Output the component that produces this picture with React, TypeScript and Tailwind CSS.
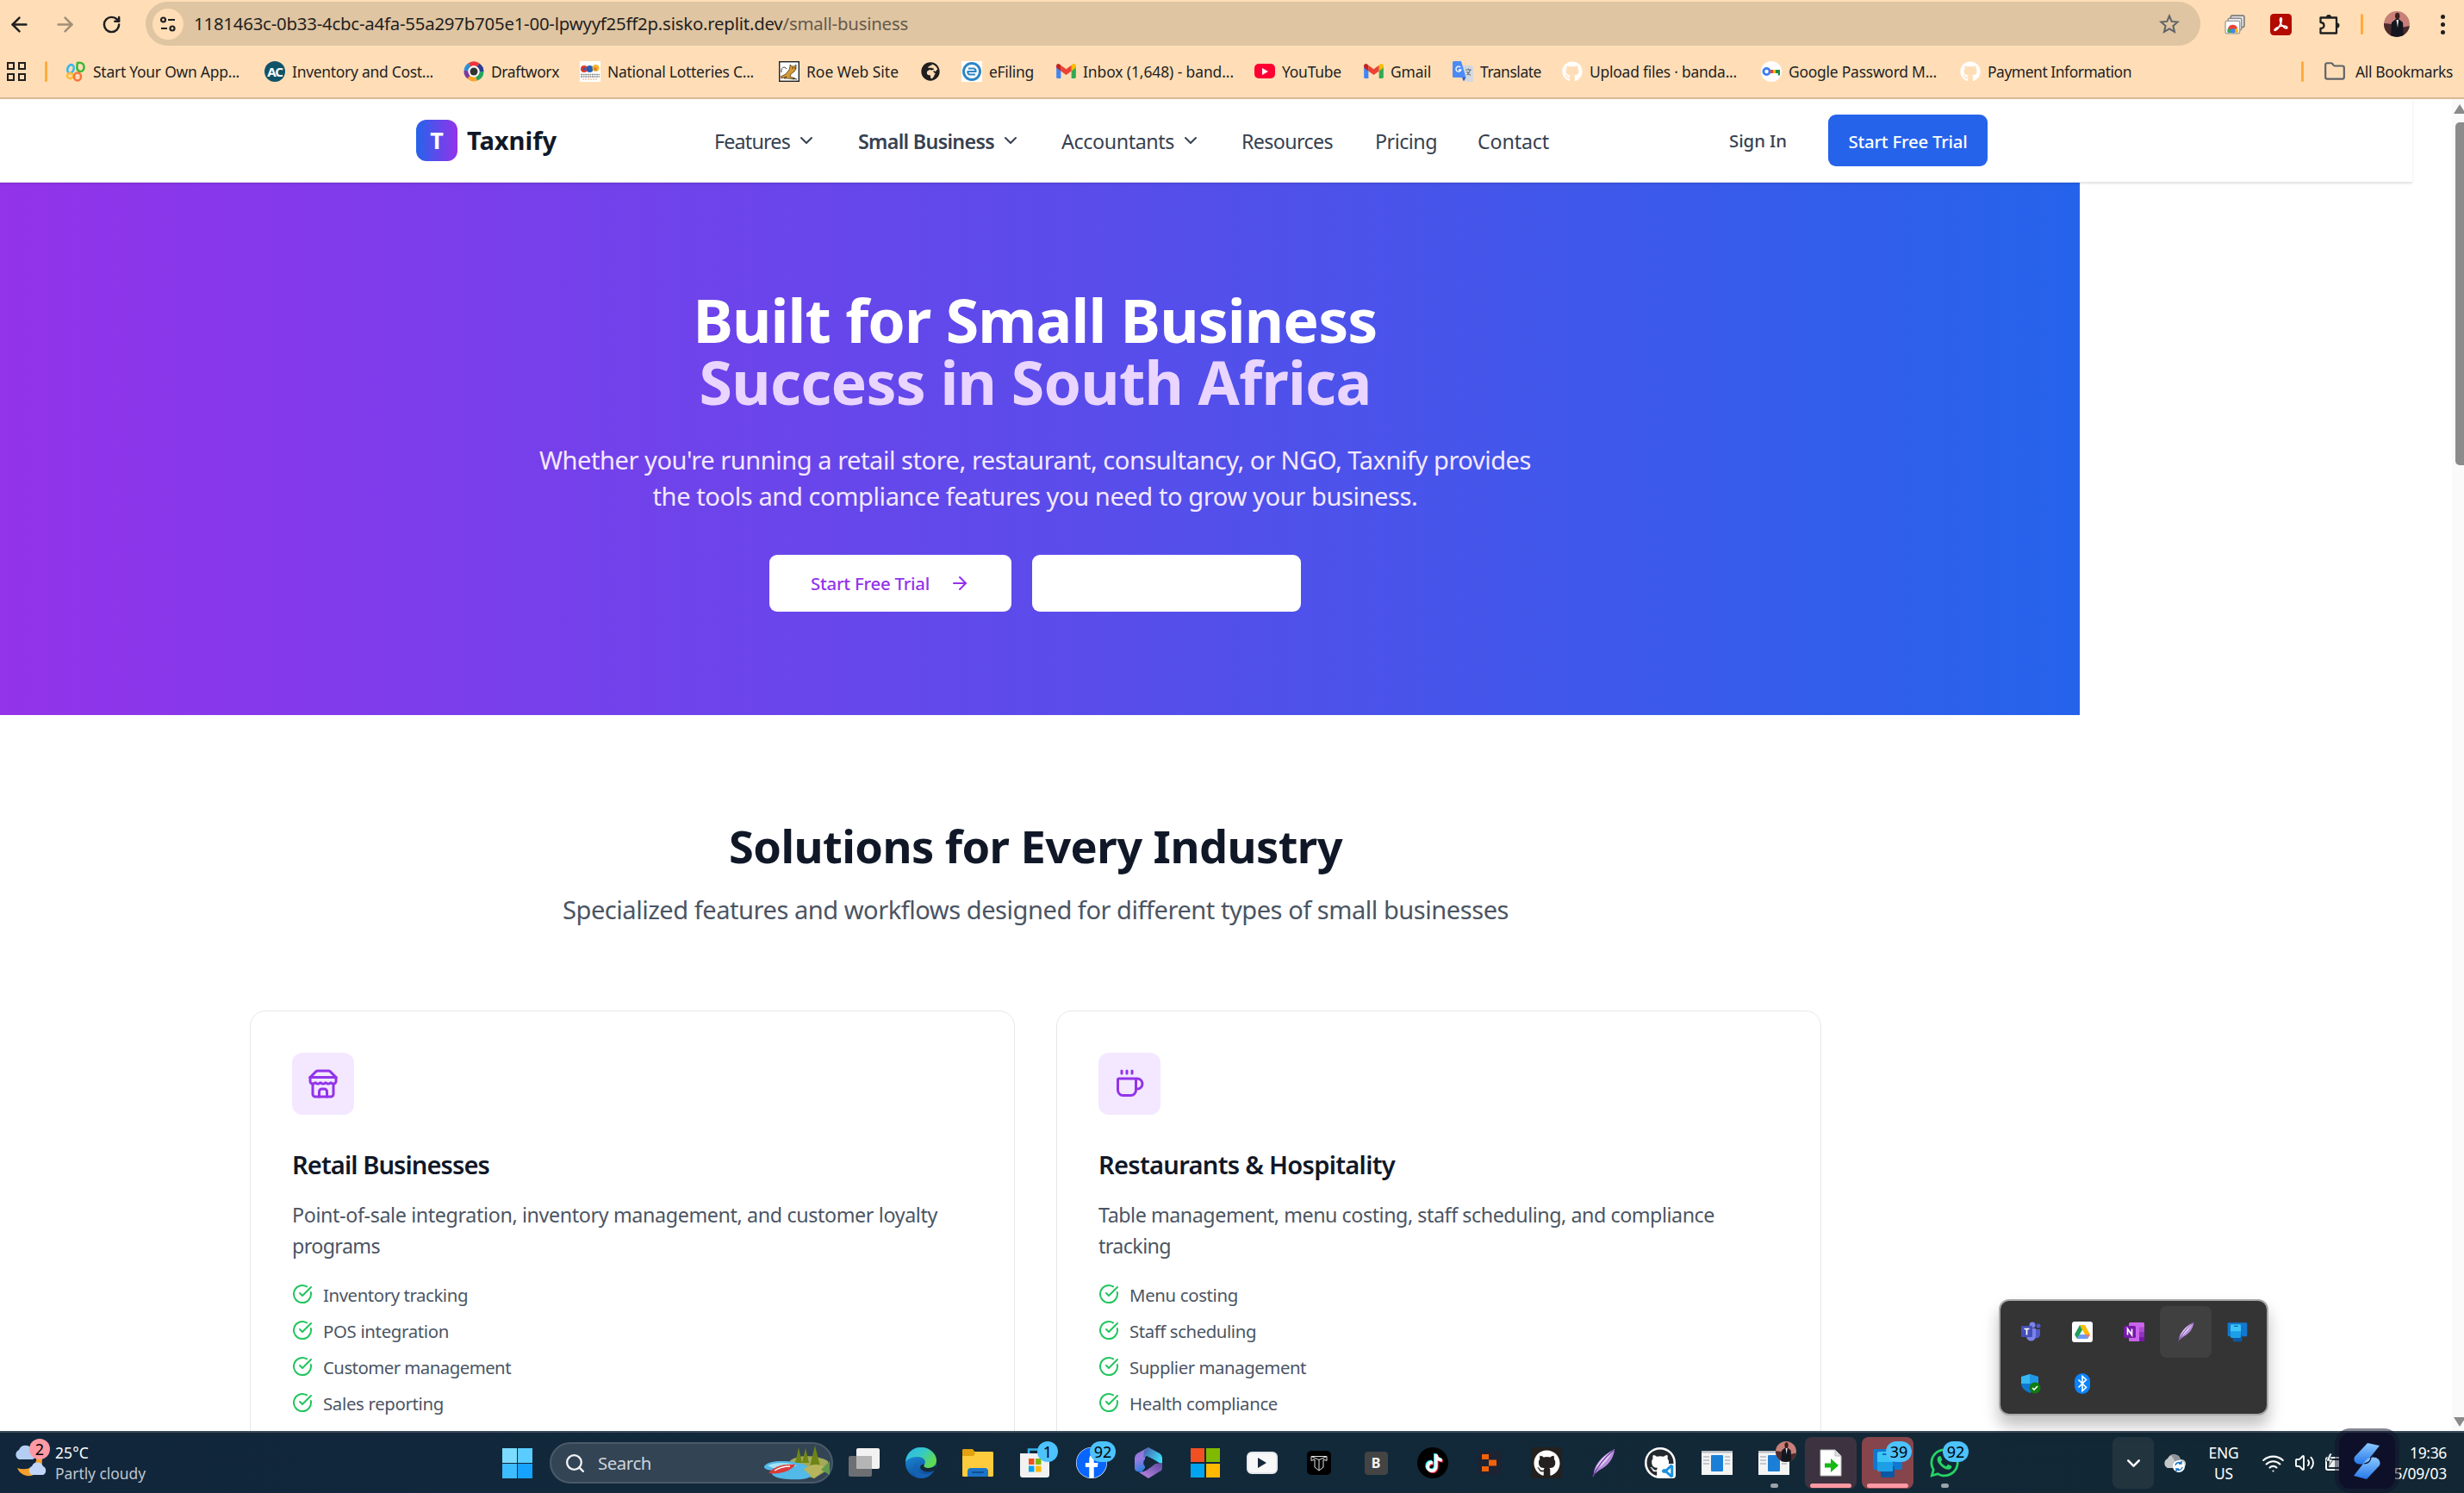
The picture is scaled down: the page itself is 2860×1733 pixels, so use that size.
import React, { useLayoutEffect, useRef } from "react";
import {
  ArrowLeft, ArrowRight, RotateCw, Folder, ChevronDown, Coffee, Search, Wifi, Volume2,
} from "lucide-react";
import { FaGithub, FaTiktok, FaWhatsapp, FaFacebook, FaGlobeAfrica } from "react-icons/fa";

/* Text set to a given measure by spreading its letters evenly. */
function T({ w, className = "", children }: { w: number; className?: string; children: React.ReactNode }) {
  const ref = useRef<HTMLSpanElement>(null);
  useLayoutEffect(() => {
    const el = ref.current;
    if (!el) return;
    el.style.letterSpacing = "0px";
    const natural = el.getBoundingClientRect().width;
    el.style.letterSpacing = (w - natural) / (el.textContent || " ").length + "px";
  }, [w]);
  return <span ref={ref} className={"inline-block text-[0.97em] whitespace-nowrap " + className}>{children}</span>;
}

function Gmail() {
  return (
    <svg viewBox="0 0 24 18" className="h-[17px] w-[23px]">
      <path d="M0 2v15a1.500 1.500 0 0 0 1.500 1H5.500V8z" fill="#4285f4" />
      <path d="M18.500 18h4a1.500 1.500 0 0 0 1.500-1.500V3l-5.500 5z" fill="#34a853" />
      <path d="M18.500 1.800V9L24 4.800V2.500c0-2.200-2.500-3.300-4.200-2z" fill="#fbbc04" />
      <path d="M5.500 9V1.800L12 6.700l6.500-4.900V9L12 13.800z" fill="#ea4335" />
      <path d="M0 2.500v2.300L5.500 9V1.800L4.200.7C2.400-.6 0 .4 0 2.500z" fill="#c5221f" />
    </svg>
  );
}

function Petals() {
  return (
    <svg viewBox="0 0 24 24" className="size-6" fill="none" strokeWidth="2.600">
      <ellipse cx="6" cy="9" rx="3.500" ry="5" stroke="#35b8f0" transform="rotate(20 6 9)" />
      <path d="M14 2c6-1 8 2 7.500 6s-4 4.500-6 3.500-2.500-5-1.500-9.500z" stroke="#3fb83a" />
      <ellipse cx="5.500" cy="17" rx="3.500" ry="3" stroke="#ffbd3a" />
      <ellipse cx="14" cy="18" rx="4" ry="4.500" stroke="#f4763b" />
    </svg>
  );
}

function Wheel() {
  return (
    <svg viewBox="0 0 24 24" className="size-6" fill="none" strokeWidth="5">
      <path d="M7 4.300A9 9 0 0 1 17 4.500" stroke="#f0353d" />
      <path d="M17 4.500A9 9 0 0 1 21 12" stroke="#2d3e94" />
      <path d="M21 12a9 9 0 0 1-6 8.300" stroke="#26a561" />
      <path d="M15 20.300A9 9 0 0 1 6 18.500" stroke="#f7a52c" />
      <path d="M6 18.500A9 9 0 0 1 3 11" stroke="#7b3aa0" />
      <path d="M3 11a9 9 0 0 1 4-6.700" stroke="#2b8fd9" />
      <circle cx="12" cy="12" r="6.500" fill="#fff" stroke="none" />
      <circle cx="12" cy="12" r="4.500" fill="#333" stroke="none" />
    </svg>
  );
}

function Lottery() {
  return (
    <svg viewBox="0 0 24 24" className="size-6">
      <rect width="24" height="24" fill="#fff" />
      <circle cx="5" cy="9" r="4" fill="#e2382e" /><circle cx="11.500" cy="9" r="4" fill="#2460b8" /><circle cx="18.500" cy="8" r="4" fill="#f4b52c" />
      <circle cx="5" cy="9" r="1.500" fill="#2460b8" /><circle cx="18" cy="9" r="1.800" fill="#d9772b" />
      <path d="M1 15.500h22M1 18h22" stroke="#8b8b8b" strokeWidth="1.600" strokeDasharray="2 .6" />
      <path d="M3 21h18" stroke="#e5a87a" strokeDasharray="2 1" />
    </svg>
  );
}

function Cat() {
  return (
    <svg viewBox="0 0 24 24" className="size-6">
      <rect x=".7" y=".7" width="22.600" height="22.600" fill="#fff" stroke="#222" strokeWidth="1.400" />
      <path d="M13 4l2 2h3l2-2v5l-2 3-4 3-1 3 6 2-1 1-7-1-5 0 3-2-6 2-1-2 6-3 4-5 1-4z" fill="#d79b35" stroke="#3a2a12" strokeWidth=".7" />
      <path d="M3 13C2 8 6 5 9 9M16 20l5 1" fill="none" stroke="#333" />
      <circle cx="16" cy="8" r=".7" fill="#111" /><circle cx="19" cy="8" r=".7" fill="#111" />
    </svg>
  );
}

function EFiling() {
  return (
    <svg viewBox="0 0 24 24" className="size-6">
      <rect width="24" height="24" fill="#fff" />
      <circle cx="12" cy="12" r="9.500" fill="none" stroke="#2f86c4" strokeWidth="3" />
      <path d="M8 8.500h6a3 3 0 0 1 2.500 3.500H8M16 15.500H10a2.500 2.500 0 0 1-2.500-3.500v-1" fill="none" stroke="#2f86c4" strokeWidth="2.200" />
    </svg>
  );
}

function Translate() {
  return (
    <svg viewBox="0 0 24 24" className="size-6">
      <path d="M9 5h13.500A1.500 1.500 0 0 1 24 6.500V22.500a1.500 1.500 0 0 1-1.500 1.500H15z" fill="#d5d8dc" />
      <path d="M1.500 0H10l5.500 19H1.500A1.500 1.500 0 0 1 0 17.500v-16A1.500 1.500 0 0 1 1.500 0z" fill="#4c8bf5" />
      <path d="M11 19h4.500L13 23.500z" fill="#3a5bc0" />
      <path d="M9.300 7.200A3 3 0 1 0 9.800 10H7" fill="none" stroke="#fff" strokeWidth="1.300" />
      <path d="M15 10h7M18.500 8.500V10M20.500 10c-.6 3-2.500 5-4 6M16.500 12c1 2 3 4 4.500 4.500" fill="none" stroke="#5d7286" strokeWidth="1.200" />
    </svg>
  );
}

function PasswordKey() {
  return (
    <svg viewBox="0 0 24 24" className="size-6">
      <circle cx="12" cy="12" r="12" fill="#fff" />
      <circle cx="6.500" cy="12" r="3.600" fill="none" stroke="#3b7df0" strokeWidth="2.800" />
      <path d="M11 10h4v4h-4z" fill="#ea4335" /><path d="M14 10h4v4h-4z" fill="#fbbc04" />
      <path d="M17 10h5v6.500h-2.200V14H17z" fill="#1e8e3e" />
    </svg>
  );
}

const AC = () => <div className="flex size-6 items-center justify-center rounded-full bg-[#0f5368] text-[15px] font-bold tracking-[-1px] text-white">AC</div>;
const White = () => <FaGithub className="size-6 text-white" />;
const Tube = () => (
  <div className="flex h-[17px] w-6 items-center justify-center rounded-[5px] bg-[#ff0033]">
    <div className="border-y-4 border-l-[7px] border-y-transparent border-l-white" />
  </div>
);

const bookmarks: { icon: () => React.ReactNode; text: string; tw: number; box: string }[] = [
  { icon: Petals, text: "Start Your Own App...", tw: 170, box: "w-[231px]" },
  { icon: AC, text: "Inventory and Cost...", tw: 164, box: "w-[231px]" },
  { icon: Wheel, text: "Draftworx", tw: 79, box: "w-[135px]" },
  { icon: Lottery, text: "National Lotteries C...", tw: 170, box: "w-[231px]" },
  { icon: Cat, text: "Roe Web Site", tw: 107, box: "w-[164px]" },
  { icon: () => <FaGlobeAfrica className="size-[22px] text-[#1f1f1f]" />, text: "", tw: 0, box: "w-[48px]" },
  { icon: EFiling, text: "eFiling", tw: 52, box: "w-[109px]" },
  { icon: Gmail, text: "Inbox (1,648) - band...", tw: 175, box: "w-[231px]" },
  { icon: Tube, text: "YouTube", tw: 69, box: "w-[126px]" },
  { icon: Gmail, text: "Gmail", tw: 47, box: "w-[104px]" },
  { icon: Translate, text: "Translate", tw: 71, box: "w-[127px]" },
  { icon: White, text: "Upload files · banda...", tw: 171, box: "w-[231px]" },
  { icon: PasswordKey, text: "Google Password M...", tw: 172, box: "w-[231px]" },
  { icon: White, text: "Payment Information", tw: 167, box: "w-[200px]" },
];

function Portrait({ className = "" }: { className?: string }) {
  return (
    <svg viewBox="0 0 30 30" className={"shrink-0 rounded-full " + className}>
      <rect width="30" height="30" fill="#c87f78" />
      <path d="M0 14l10 1v15H0zM20 19l10-2v13H20z" fill="#4b2b2c" />
      <path d="M9 13l5-4h3l5 4 1 17H8z" fill="#14161f" />
      <path d="M14.500 10h2.500l-1 9z" fill="#f2f2f2" />
      <ellipse cx="15.700" cy="5.500" rx="2.700" ry="3.800" fill="#3a1f1a" />
    </svg>
  );
}

function Toolbar() {
  return (
    <div className="flex h-[56px] items-center text-[#1f1f1f]">
      <ArrowLeft className="ml-[9px] size-[27px]" strokeWidth={2.2} />
      <ArrowRight className="ml-[26px] size-[27px] text-[#a18f78]" strokeWidth={2.2} />
      <RotateCw className="ml-[29px] size-[23px]" strokeWidth={2.6} />
      <div className="mb-px ml-[28px] flex h-[51px] w-[2385px] items-center rounded-full bg-[#dfc5a2]">
        <div className="ml-2 flex size-9 items-center justify-center rounded-full bg-[#ffdeb7]">
          <svg viewBox="0 0 20 20" className="size-5" fill="none" stroke="#1f1f1f" strokeWidth="2.200">
            <circle cx="4.500" cy="5" r="2.500" /><path d="M10 5h8M2 15h7" /><circle cx="15" cy="15" r="2.500" />
          </svg>
        </div>
        <div className="ml-[12px] flex text-[21px]">
          <T w={829}>1181463c-0b33-4cbc-a4fa-55a297b705e1-00-lpwyyf25ff2p.sisko.replit.dev<span className="text-[#655a4c]">/small-business</span></T>
        </div>
        <svg viewBox="0 0 24 24" className="mr-[24px] ml-auto size-6" fill="none" stroke="#5f6368" strokeWidth="2">
          <path d="M12 2.500l2.700 6.400 6.900.6-5.200 4.600 1.600 6.800L12 17.300l-6 3.600 1.600-6.800L2.400 9.500l6.900-.6z" />
        </svg>
      </div>
      <svg viewBox="0 0 24 24" className="ml-7 size-[25px]">
        <rect x="7" y="2" width="15" height="13" rx="1.500" fill="#e6e6e6" stroke="#7d7d7d" strokeWidth="1.600" />
        <rect x="4" y="5" width="15" height="13" rx="1.500" fill="#eee" stroke="#8a8a8a" strokeWidth="1.300" />
        <rect x="1" y="8" width="16" height="14" rx="1.500" fill="#fff" stroke="#9a9a9a" strokeWidth="1.200" />
        <path d="M3.500 21a5.500 5.500 0 0 1 1.500-6l4 4v2z" fill="#34a853" /><path d="M4 16a5.500 5.500 0 0 1 10.500 0l-5 3z" fill="#ea4335" />
        <path d="M14 15.500a5.500 5.500 0 0 1 1 5.500h-5z" fill="#fbbc04" /><circle cx="9.500" cy="19" r="2.600" fill="#4285f4" />
      </svg>
      <svg viewBox="0 0 24 24" className="ml-7 size-[25px]">
        <rect width="24" height="24" rx="4" fill="#b30b00" />
        <path d="M5 18.500c-1-1.500 5-4.500 7.500-4.800 3-.5 7 .2 6.500 2-.8 2-6.500-2-7.500-6-.7-3-.7-5 .5-5s1 2.500 0 5.500c-1 3-4.500 9-7 8.300z" fill="none" stroke="#fff" strokeWidth="1.600" />
      </svg>
      <svg viewBox="0 0 26 26" className="ml-[31px] size-[26px]" fill="none" stroke="#1f1f1f" strokeWidth="2.300" strokeLinejoin="round">
        <path d="M2.500 5.500H21v18H2.500v-5.500c3-.2 4-1.500 4-3.500s-1-3.300-4-3.500z" />
        <path d="M9 5a3 3 0 0 1 6 0zM21.500 11.500a3 3 0 0 1 0 6z" fill="#1f1f1f" stroke="none" />
      </svg>
      <div className="ml-[23px] h-6 w-[3px] rounded bg-[#ffab3d]" />
      <Portrait className="ml-[24px] size-[30px]" />
      <div className="ml-[36px] flex flex-col gap-1">
        <div className="size-[5px] rounded-full bg-current" /><div className="size-[5px] rounded-full bg-current" /><div className="size-[5px] rounded-full bg-current" />
      </div>
    </div>
  );
}

function Bookmarks() {
  return (
    <div className="flex h-[57px] items-center pb-[3px] text-[18px] text-[#1f1f1f]">
      <div className="ml-2 grid grid-cols-2 gap-[4px]">
        <div className="size-[9px] border-2 border-current" /><div className="size-[9px] border-2 border-current" />
        <div className="size-[9px] border-2 border-current" /><div className="size-[9px] border-2 border-current" />
      </div>
      <div className="ml-[22px] h-6 w-[3px] rounded bg-[#ffab3d]" />
      <div className="ml-[21px] flex">
        {bookmarks.map((b, i) => (
          <div key={i} className={"flex shrink-0 items-center " + b.box}>
            <div className="mr-[8px] flex w-6 shrink-0 justify-center"><b.icon /></div>
            {b.text && <T w={b.tw}>{b.text}</T>}
          </div>
        ))}
      </div>
      <div className="mr-[23px] ml-auto h-6 w-[3px] rounded bg-[#ffab3d]" />
      <Folder className="mr-[11px] size-[26px] text-[#5f6368]" strokeWidth={2} />
      <div className="mr-[13px]"><T w={113}>All Bookmarks</T></div>
    </div>
  );
}

const nav = [
  { text: "Features", w: 88, box: "w-[167px]", menu: true, bold: false },
  { text: "Small Business", w: 158, box: "w-[236px]", menu: true, bold: true },
  { text: "Accountants", w: 131, box: "w-[209px]", menu: true, bold: false },
  { text: "Resources", w: 106, box: "w-[155px]", menu: false, bold: false },
  { text: "Pricing", w: 72, box: "w-[119px]", menu: false, bold: false },
  { text: "Contact", w: 83, box: "w-[292px]", menu: false, bold: false },
];

function Header() {
  return (
    <header className="relative flex h-[97px] w-[2800px] items-center border-b border-gray-200 bg-white pl-[483px] shadow-sm">
      <div className="flex size-12 items-center justify-center rounded-xl bg-linear-to-r/srgb from-[#2563eb] to-[#9333ea] text-[27px] font-bold text-white">T</div>
      <div className="ml-[11px] w-[287px] text-[30px] font-bold text-gray-900"><T w={104}>Taxnify</T></div>
      <nav className="flex text-[24px] text-[#374151]">
        {nav.map((n) => (
          <div key={n.text} className={"flex items-center " + n.box}>
            <T w={n.w} className={n.bold ? "pt-[2px] font-semibold" : "pt-[2px]"}>{n.text}</T>
            {n.menu && <ChevronDown className="ml-[7px] size-6" strokeWidth={2} />}
          </div>
        ))}
      </nav>
      <div className="pt-[2px] text-[21px] font-medium text-[#374151]"><T w={67}>Sign In</T></div>
      <div className="ml-[48px] flex h-[60px] w-[185px] items-center justify-center rounded-[9px] bg-[#2563eb] pt-[2px] text-[21px] font-medium text-white"><T w={138}>Start Free Trial</T></div>
    </header>
  );
}

function Hero() {
  return (
    <section className="flex h-[618px] w-[2414px] flex-col items-center bg-linear-to-r/srgb from-[#9333ea] to-[#2563eb] pt-[123px] pr-[11px]">
      <h1 className="flex flex-col items-center text-[72px] leading-[72px] font-bold text-white">
        <T w={794}>Built for Small Business</T>
        <T w={780} className="text-[#e9d5ff]">Success in South Africa</T>
      </h1>
      <p className="mt-[34px] flex flex-col items-center text-[30px] leading-[42px] text-[#f3e8ff]">
        <T w={1151}>Whether you're running a retail store, restaurant, consultancy, or NGO, Taxnify provides</T>
        <T w={888}>the tools and compliance features you need to grow your business.</T>
      </p>
      <div className="mt-[47px] flex gap-6">
        <div className="flex h-[66px] w-[281px] items-center rounded-[9px] bg-white pl-12 text-[21px] font-medium text-[#9333ea]">
          <T w={138} className="pt-px">Start Free Trial</T>
          <ArrowRight className="ml-[23px] size-6" strokeWidth={2} />
        </div>
        <div className="h-[66px] w-[312px] rounded-[9px] bg-white" />
      </div>
    </section>
  );
}

function StoreIcon() {
  return (
    <svg viewBox="0 0 24 24" className="size-9" fill="none" stroke="currentColor" strokeWidth="2" strokeLinecap="round" strokeLinejoin="round">
      <path d="m2 7 4.410-4.410A2 2 0 0 1 7.830 2h8.340a2 2 0 0 1 1.420.590L22 7" />
      <path d="M4 12v8a2 2 0 0 0 2 2h12a2 2 0 0 0 2-2v-8" />
      <path d="M15 22v-4a2 2 0 0 0-2-2h-2a2 2 0 0 0-2 2v4" />
      <path d="M2 7h20" />
      <path d="M22 7v3a2 2 0 0 1-2 2a2.700 2.700 0 0 1-1.590-.630.700.700 0 0 0-.820 0A2.700 2.700 0 0 1 16 12a2.700 2.700 0 0 1-1.590-.630.700.700 0 0 0-.820 0A2.700 2.700 0 0 1 12 12a2.700 2.700 0 0 1-1.590-.630.700.700 0 0 0-.820 0A2.700 2.700 0 0 1 8 12a2.700 2.700 0 0 1-1.590-.630.700.700 0 0 0-.820 0A2.700 2.700 0 0 1 4 12a2 2 0 0 1-2-2V7" />
    </svg>
  );
}

function Check() {
  return (
    <svg viewBox="0 0 24 24" className="size-6 text-[#22c55e]" fill="none" stroke="currentColor" strokeWidth="2" strokeLinecap="round" strokeLinejoin="round">
      <path d="M21.801 10A10 10 0 1 1 17 3.335" /><path d="m9 11 3 3L22 4" />
    </svg>
  );
}

type Line = [string, number];
function Card({ icon, title, lines, items }: { icon: React.ReactNode; title: Line; lines: Line[]; items: Line[] }) {
  return (
    <div className="h-[700px] w-[888px] shrink-0 rounded-[18px] border border-gray-200 bg-white px-12 pt-12">
      <div className="flex size-[72px] items-center justify-center rounded-xl bg-[#f3e8ff] text-[#9333ea]">{icon}</div>
      <h3 className="mt-[35px] text-[30px] leading-[45px] font-semibold text-gray-900"><T w={title[1]}>{title[0]}</T></h3>
      <p className="mt-[17px] flex flex-col items-start text-[24px] leading-9 text-[#4b5563]">
        {lines.map((l) => <T key={l[0]} w={l[1]}>{l[0]}</T>)}
      </p>
      <ul className="mt-[24px] flex flex-col gap-3 text-[21px] leading-[30px] text-[#4b5563]">
        {items.map((l) => (
          <li key={l[0]} className="flex h-[30px] items-center gap-3"><div className="mb-[2px]"><Check /></div><T w={l[1]}>{l[0]}</T></li>
        ))}
      </ul>
    </div>
  );
}

function Industries() {
  return (
    <section className="flex w-[2404px] flex-col items-center pt-[121px]">
      <h2 className="text-[54px] leading-[60px] font-bold text-gray-900"><T w={712}>Solutions for Every Industry</T></h2>
      <p className="mt-[23px] text-[30px] leading-[42px] text-[#4b5563]"><T w={1098}>Specialized features and workflows designed for different types of small businesses</T></p>
      <div className="mt-24 flex gap-12">
        <Card
          icon={<StoreIcon />}
          title={["Retail Businesses", 229]}
          lines={[["Point-of-sale integration, inventory management, and customer loyalty", 749], ["programs", 102]]}
          items={[["Inventory tracking", 168], ["POS integration", 146], ["Customer management", 218], ["Sales reporting", 140]]}
        />
        <Card
          icon={<Coffee className="size-9" strokeWidth={2} />}
          title={["Restaurants & Hospitality", 344]}
          lines={[["Table management, menu costing, staff scheduling, and compliance", 715], ["tracking", 84]]}
          items={[["Menu costing", 126], ["Staff scheduling", 147], ["Supplier management", 205], ["Health compliance", 172]]}
        />
      </div>
    </section>
  );
}

function Feather({ className = "" }: { className?: string }) {
  return (
    <svg viewBox="0 0 32 36" className={className}>
      <path d="M4 33C4 23 12 10 30 1c-1 11-7 20-19 26z" fill="#b68bdc" />
      <path d="M6 27C9 17 17 8 28 3c-5 9-10 16-20 23z" fill="#e0cdf3" />
      <path d="M3 35C9 22 17 12 29 2" fill="none" stroke="#7440a5" strokeWidth="1.500" />
    </svg>
  );
}

function Phone({ className = "" }: { className?: string }) {
  return (
    <svg viewBox="0 0 36 36" className={className}>
      <rect x="1" y="2" width="34" height="24" rx="2" fill="#1178cf" />
      <rect x="10" y="22" width="16" height="13" rx="2" fill="#0a58a5" />
      <rect x="6" y="5" width="18" height="23" rx="2" fill="#3cc4f5" />
      <path d="M6 17h18v9a2 2 0 0 1-2 2H8a2 2 0 0 1-2-2z" fill="#1c9fe6" />
      <rect x="12" y="7" width="7" height="2" fill="#0d6db6" />
    </svg>
  );
}

const Badge = ({ children, wide = false }: { children: React.ReactNode; wide?: boolean }) => (
  <div className={"absolute flex h-6 items-center justify-center rounded-full bg-[#4cc2ff] text-[18px] text-black " + (wide ? "top-[5px] left-[28px] w-[30px]" : "top-[5px] left-[33px] w-6")}>{children}</div>
);

function WindowIcon() {
  return (
    <svg viewBox="0 0 36 28" className="h-7 w-9">
      <rect width="36" height="28" fill="#f4f4f4" /><rect width="36" height="2.500" fill="#b9bdc2" />
      <path d="M2 7h7M2 11h7M2 15h7M27 7h6M27 11h6M27 15h6" stroke="#c4c8cc" strokeWidth="2" />
      <rect x="11" y="5" width="14" height="19" rx="1" fill="#1a7fd6" />
    </svg>
  );
}

const apps: { icon: React.ReactNode; badge?: React.ReactNode; cls?: string; bar?: "dot" | "line" }[] = [
  { icon: <svg viewBox="0 0 36 36" className="size-9"><rect y="10" width="27" height="24" rx="2" fill="#6d6f72" /><rect x="9" y="1" width="27" height="24" rx="2" fill="#f2f2f2" /><path d="M9 10h18v15H11a2 2 0 0 1-2-2z" fill="#b5b5b5" /></svg> },
  { icon: (
    <svg viewBox="0 0 36 36" className="size-9">
      <defs>
        <linearGradient id="ea" x1="0" y1="0" x2="1" y2=".6"><stop offset="0" stopColor="#2fb5ee" /><stop offset=".5" stopColor="#34c9c8" /><stop offset="1" stopColor="#62db4a" /></linearGradient>
        <linearGradient id="eb" x1="0" y1="0" x2=".4" y2="1"><stop offset="0" stopColor="#1e9be6" /><stop offset="1" stopColor="#0f4f9c" /></linearGradient>
      </defs>
      <circle cx="18" cy="18" r="18" fill="url(#eb)" />
      <path d="M0 17C1 6 9 0 18 0c11 0 18 8 18 15 0 6-5 9-9 9-5 0-7-2-5-4 3-5-2-9-8-9C7 11 2 14 0 17z" fill="url(#ea)" />
      <path d="M22 20c-2 2 0 4 5 4 3 0 6-1 8-3v5c-7 4-15 3-18-2 0-3 2-5 5-4z" fill="#142838" />
      <path d="M14 17c-4 7 1 14 9 14 4 0 6-1 8-2-3 5-8 7-13 7-9-1-13-12-4-19z" fill="#1562b5" />
    </svg>) },
  { icon: <svg viewBox="0 0 36 34" className="h-[34px] w-9"><path d="M0 3a2 2 0 0 1 2-2h10l4 5H0z" fill="#e3a10d" /><rect y="4" width="36" height="29" rx="2" fill="#ffd04a" /><path d="M0 9l13 0 4-5h17a2 2 0 0 1 2 2v25a2 2 0 0 1-2 2H2a2 2 0 0 1-2-2z" fill="#fecb3c" /><path d="M0 3a2 2 0 0 1 2-2h9l4 5-2 3H0z" fill="#e3a10d" /><path d="M6 33v-6a4 4 0 0 1 4-4h16a4 4 0 0 1 4 4v6z" fill="#1c74c8" /><rect x="11" y="27" width="14" height="2" rx="1" fill="#0d4f93" /></svg> },
  { icon: <svg viewBox="0 0 36 36" className="size-9"><path d="M11 8V2.500h14V8" fill="none" stroke="#35b3ea" strokeWidth="2.500" /><path d="M1 7h34v25a3 3 0 0 1-3 3H4a3 3 0 0 1-3-3z" fill="#f1f1f1" /><path d="M11 13h6.500v7H11z" fill="#f25022" /><path d="M19 13h6.500v7H19z" fill="#7fba00" /><path d="M11 21.500h6.500v7H11z" fill="#00a4ef" /><path d="M19 21.500h6.500v7H19z" fill="#ffb900" /></svg>, badge: <Badge>1</Badge> },
  { icon: <div className="rounded-full bg-white"><FaFacebook className="size-9 text-[#0866ff]" /></div>, badge: <Badge wide>92</Badge> },
  { icon: (
    <svg viewBox="0 0 32 36" className="h-9 w-8">
      <defs>
        <linearGradient id="ma" x1="0" y1="0" x2=".3" y2="1"><stop offset="0" stopColor="#7d6fd0" /><stop offset=".5" stopColor="#9a7be0" /><stop offset="1" stopColor="#2f7fe0" /></linearGradient>
        <linearGradient id="mb" x1="0" y1="0" x2="1" y2=".6"><stop offset="0" stopColor="#4a58a8" /><stop offset="1" stopColor="#3ddcf5" /></linearGradient>
        <linearGradient id="mc" x1="0" y1="1" x2="1" y2="0"><stop offset="0" stopColor="#c58ae8" /><stop offset="1" stopColor="#5a4a9c" /></linearGradient>
      </defs>
      <path d="M16 0L3 7q-3 2-3 5v12q0 3 3 4l5 1 4-5V12z" fill="url(#ma)" />
      <path d="M16 0l13 7q3 2 3 5v8l-10-6-8-4-4 2 1-8z" fill="url(#mb)" />
      <path d="M32 18v6q0 3-3 4l-13 8-11-7q6 0 11-4l8-6z" fill="url(#mc)" />
      <circle cx="16" cy="18" r="5.800" fill="#15293a" />
    </svg>) },
  { icon: <div className="grid grid-cols-2 gap-[2px]"><div className="size-4 bg-[#f25022]" /><div className="size-4 bg-[#7fba00]" /><div className="size-4 bg-[#00a4ef]" /><div className="size-4 bg-[#ffb900]" /></div> },
  { icon: <div className="flex h-[26px] w-9 items-center justify-center rounded-[6px] border-2 border-gray-200 bg-[#f8f8f8]"><div className="border-y-[6px] border-l-[10px] border-y-transparent border-l-[#17283a]" /></div> },
  { icon: <svg viewBox="0 0 28 28" className="size-7"><rect width="28" height="28" rx="5" fill="#000" /><path d="M5 6.500h18v5l-4-1.500v9l-5 4-5-4v-9l-4 1.500zM5 6.500l9 4 9-4M14 10.500v12" fill="none" stroke="#e5e5e5" strokeWidth="1" /></svg> },
  { icon: <div className="flex h-[27px] w-[27px] items-center justify-center rounded-sm bg-[#444] text-[16px] font-bold text-gray-100">B</div> },
  { icon: (
    <div className="relative flex size-9 items-center justify-center rounded-full bg-black">
      <FaTiktok className="absolute top-[7px] left-[8px] size-[21px] text-[#25f4ee]" />
      <FaTiktok className="absolute top-[9px] left-[10px] size-[21px] text-[#fe2c55]" />
      <FaTiktok className="absolute top-[8px] left-[9px] size-[21px] text-white" />
    </div>) },
  { icon: <svg viewBox="0 0 28 28" className="size-7"><rect width="28" height="28" rx="3" fill="#1c2333" /><path d="M5 4h8v6H5zM13 10.500h9v7h-9zM5 18h8v6H5z" fill="#f26207" /></svg> },
  { icon: <div className="flex size-9 items-center justify-center bg-[#24201f]"><FaGithub className="size-[31px] text-white" /></div> },
  { icon: <Feather className="h-[34px] w-[30px]" /> },
  { icon: (
    <div className="relative size-9 rounded-full bg-white p-[2px]">
      <FaGithub className="size-8 text-[#24292f]" />
      <svg viewBox="0 0 20 20" className="absolute right-0 bottom-0 size-[17px]"><rect width="20" height="20" rx="4" fill="#fff" /><path d="M15 2L5 11 2 8.500M15 18L5 9 2 11.500M15 2v16" fill="none" stroke="#1b8fe0" strokeWidth="3.500" /></svg>
    </div>) },
  { icon: <WindowIcon /> },
  { icon: <WindowIcon />, badge: <Portrait className="absolute top-[5px] left-[32px] size-6" />, bar: "dot" },
  { icon: <svg viewBox="0 0 26 32" className="h-8 w-[26px]"><path d="M1 1h17l7 7v23H1z" fill="#fff" stroke="#bbb" /><path d="M18 1v7h7" fill="#ddd" stroke="#bbb" /><path d="M6 16.500h7V11l9 8-9 8v-5.500H6z" fill="#16b916" /></svg>, cls: "bg-[#3d3340]", bar: "line" },
  { icon: <Phone className="size-9" />, cls: "bg-[#86444b]", badge: <Badge wide>39</Badge>, bar: "line" },
  { icon: <FaWhatsapp className="size-[38px] text-[#25d366]" />, badge: <Badge wide>92</Badge>, bar: "dot" },
];

function TaskbarSearch() {
  return (
    <div className="ml-5 flex h-12 w-[329px] items-center rounded-full border-2 border-[#4a5a69] bg-[#334454] pl-[15px]">
      <Search className="size-[25px] text-gray-100" strokeWidth={2.2} />
      <div className="ml-[14px] text-[21px] text-[#ced5db]"><T w={62}>Search</T></div>
      <svg viewBox="0 0 76 40" className="mr-[2px] ml-auto h-10 w-[76px]">
        <path d="M30 18C36 11 60 10 74 18v10L58 38 30 30z" fill="#a3a85a" />
        <path d="M0 24c4-6 16-6 24-6 14 0 24 4 30 8s2 12-10 13c-12 1-28 0-33-4-4-3-2-5 2-6-8 0-14-2-13-5z" fill="#52b9e8" />
        <path d="M4 23c8-4 24-4 34 0l-8 3H10z" fill="#a6e4f5" />
        <path d="M5 32c6-8 18-11 31-10-3 6-16 12-31 10z" fill="#d93a3a" />
        <path d="M12 29c6-4 12-5 18-5" stroke="#fff" fill="none" strokeWidth="1.500" />
        <path d="M40 2l4 18h-8zM48 3l4 17h-8zM59 0l6 24H53z" fill="#6d8516" />
        <path d="M46 28c6-7 18-8 26-2l-14 12z" fill="#b6b45c" />
        <path d="M66 28l10-10v16z" fill="#5f9a4a" />
      </svg>
    </div>
  );
}

function Taskbar() {
  return (
    <footer className="relative flex h-[72px] shrink-0 items-center border-t-2 border-[#3c4a59] bg-linear-to-r from-[#11263b] via-[#12293a] to-[#122733] text-[18px] leading-6 text-white">
      <div className="flex w-[583px] items-center pl-[16px]">
        <div className="relative mr-[8px] mb-2 size-10">
          <svg viewBox="0 0 40 40" className="size-10">
            <path d="M26 14c3 14-10 20-22 16 4 10 16 12 24 5 5-5 6-13 4-20z" fill="#f5a02c" />
            <path d="M6 20a6 6 0 0 1 0-11 8 8 0 0 1 15 0 6 6 0 0 1 1 11z" fill="#b4cdf3" />
            <path d="M21 38a5.500 5.500 0 0 1 0-10 7 7 0 0 1 13 0 5.500 5.500 0 0 1 0 10z" fill="#c0d5f7" />
          </svg>
          <div className="absolute -top-1 left-[18px] flex size-6 items-center justify-center rounded-full bg-[#ff99a4] text-black">2</div>
        </div>
        <div className="flex flex-col items-start">
          <T w={39}>25°C</T>
          <T w={105} className="text-[#bfc7ce]">Partly cloudy</T>
        </div>
      </div>
      <div className="grid grid-cols-2 gap-px">
        <div className="size-[17px] bg-[#7cdcff]" /><div className="size-[17px] bg-[#5accff]" />
        <div className="size-[17px] bg-[#3dbcff]" /><div className="size-[17px] bg-[#16a2ff]" />
      </div>
      <TaskbarSearch />
      <div className="ml-[6px] flex gap-[6px]">
        {apps.map((a, i) => (
          <div key={i} className={"relative flex size-[60px] items-center justify-center rounded-lg " + (a.cls || "")}>
            {a.icon}
            {a.badge}
            {a.bar === "line" && <div className="absolute bottom-px left-[6px] h-[5px] w-12 rounded-full bg-[#ff99a4]" />}
            {a.bar === "dot" && <div className="absolute bottom-px left-[26px] h-[5px] w-[9px] rounded-full bg-[#9aa3a9]" />}
          </div>
        ))}
      </div>
      <div className="ml-auto flex items-center">
        <div className="flex h-[60px] w-12 items-center justify-center rounded-lg bg-[#22353f]"><ChevronDown className="size-[25px]" strokeWidth={2.4} /></div>
        <svg viewBox="0 0 28 24" className="ml-[10px] h-6 w-7">
          <path d="M6 18a6 6 0 0 1 0-11 8 8 0 0 1 15 1 5 5 0 0 1 2 10z" fill="#c3c7ca" /><path d="M10 3a8 8 0 0 1 11 5l-6 3z" fill="#8d9499" />
          <circle cx="19" cy="16" r="7" fill="#fff" /><path d="M15 15a4 4 0 0 1 7-2M23 17a4 4 0 0 1-7 2M22 10v3h-3M16 22v-3h3" fill="none" stroke="#1773c7" strokeWidth="1.400" />
        </svg>
        <div className="ml-[20px] flex w-[46px] flex-col items-center"><T w={35}>ENG</T><T w={22}>US</T></div>
        <Wifi className="ml-[21px] size-[27px]" strokeWidth={1.900} />
        <Volume2 className="ml-[11px] size-6" strokeWidth={1.900} />
        <svg viewBox="0 0 30 22" className="ml-[11px] h-[22px] w-[30px]"><rect x="2" y="5" width="25" height="14" rx="2" fill="none" stroke="#fff" strokeWidth="2" /><rect x="5" y="8" width="19" height="8" fill="#eee" /><path d="M6 0L2 9h4l-2 7 6-9H6l3-7z" fill="#fff" stroke="#122733" strokeWidth=".8" /></svg>
        <div className="mr-[20px] ml-[20px] flex w-[92px] flex-col items-end"><T w={43}>19:36</T><T w={91}>2025/09/03</T></div>
      </div>
      <div className="absolute -top-[5px] left-[2710px] size-[75px] rounded-[18px] bg-[#10122b]/50 p-[5px]">
        <div className="flex size-[65px] items-center justify-center rounded-[13px] bg-[#0e102a]">
          <svg viewBox="0 0 31 42" className="h-[42px] w-[31px]">
            <defs>
              <linearGradient id="su" x1="0" y1="0" x2="0" y2="1"><stop offset="0" stopColor="#8cc8ff" /><stop offset="1" stopColor="#2577e8" /></linearGradient>
            </defs>
            <path d="M16 0l14 3-15 19q-5 4-11 2-5-3-3-8z" fill="url(#su)" />
            <path d="M15 42L0 38l14-18q5-5 12-3 6 3 4 9z" fill="url(#su)" />
            <path d="M12 24q8-1 8-8" fill="none" stroke="#0e102a" strokeWidth="1.200" />
          </svg>
        </div>
      </div>
    </footer>
  );
}

const tray: { icon: React.ReactNode; on?: boolean }[] = [
  { icon: <svg viewBox="0 0 24 24" className="size-6"><circle cx="14" cy="4" r="3.500" fill="#7b83eb" /><circle cx="21" cy="5" r="2.500" fill="#5059c9" /><path d="M7 8h11v9a5.500 5.500 0 0 1-11 0z" fill="#7b83eb" /><path d="M18 9h5v6a4 4 0 0 1-5 4z" fill="#5059c9" /><rect x="1" y="5" width="13" height="13" rx="1" fill="#464eb8" /><path d="M4.500 8.500h6M7.500 8.500v7" stroke="#fff" strokeWidth="1.700" /></svg> },
  { icon: <svg viewBox="0 0 24 24" className="size-6"><rect width="24" height="24" rx="3" fill="#fff" /><path d="M9 4h6l6 11h-6z" fill="#fbbc04" /><path d="M9 4l3 5.500L6 20 3 15z" fill="#1e9e57" /><path d="M8.500 15H21l-3 5H6z" fill="#6b9cf5" /><path d="M15.500 15H21l-2.500 4.500z" fill="#ee7a6e" /></svg> },
  { icon: <svg viewBox="0 0 24 24" className="size-6"><rect x="6" y="1" width="18" height="22" rx="1.500" fill="#ca64ea" /><path d="M18 6.500h6v5.500h-6z" fill="#ae4bd5" /><path d="M18 12h6v5.500h-6z" fill="#9332bf" /><path d="M18 17.500h6V23h-6z" fill="#7719aa" /><rect y="5" width="14" height="14" rx="1.500" fill="#7719aa" /><path d="M4.500 15.500v-7l5 7v-7" fill="none" stroke="#fff" strokeWidth="1.700" /></svg> },
  { icon: <Feather className="size-6" />, on: true },
  { icon: <Phone className="size-6" /> },
  { icon: <svg viewBox="0 0 24 24" className="size-6"><path d="M11 1l10 3v7c0 6-4 9-10 12C5 20 1 17 1 11V4z" fill="#0f77d1" /><path d="M11 1v11H1V4z" fill="#36b9f3" /><path d="M11 1l10 3v8H11z" fill="#1f97e4" /><circle cx="17" cy="17" r="6.500" fill="#107c10" /><path d="M14 17l2 2 4-4" fill="none" stroke="#fff" strokeWidth="1.600" /></svg> },
  { icon: <svg viewBox="0 0 24 24" className="size-6"><rect x="3" width="18" height="24" rx="9" fill="#0a84ff" /><path d="M7.500 7.500l9 9L12 20.500v-17l4.500 4-9 9" fill="none" stroke="#fff" strokeWidth="1.600" /></svg> },
];

export default function App() {
  return (
    <div className="relative flex h-[1733px] w-[2860px] flex-col overflow-hidden bg-white font-['Noto_Sans','Open_Sans',sans-serif]">
      <div className="h-[115px] shrink-0 border-b-2 border-[#d9b996] bg-[#ffdeb7]">
        <Toolbar />
        <Bookmarks />
      </div>
      <div className="flex min-h-0 flex-1">
        <main className="w-[2846px] overflow-hidden">
          <Header />
          <Hero />
          <Industries />
        </main>
        <div className="flex w-[14px] flex-col items-center bg-[#fafafa] pt-[6px] pb-[5px] pl-1">
          <div className="border-x-[7px] border-b-[11px] border-x-transparent border-b-[#8b8b8b]" />
          <div className="mt-[10px] h-[398px] w-[10px] rounded-l-[5px] bg-[#8b8b8b]" />
          <div className="mt-auto border-x-[7px] border-t-[11px] border-x-transparent border-t-[#8b8b8b]" />
        </div>
      </div>
      <Taskbar />
      <div className="absolute top-[1508px] left-[2320px] grid h-[135px] w-[313px] grid-cols-5 content-start rounded-[12px] border-2 border-[#a9a9a9] bg-[#343434] px-[4.500px] pt-[6px] shadow-[0_12px_18px_rgba(0,0,0,0.250)]">
        {tray.map((t, i) => (
          <div key={i} className={"flex size-[60px] items-center justify-center rounded-lg " + (t.on ? "bg-[#404040]" : "")}>{t.icon}</div>
        ))}
      </div>
    </div>
  );
}
